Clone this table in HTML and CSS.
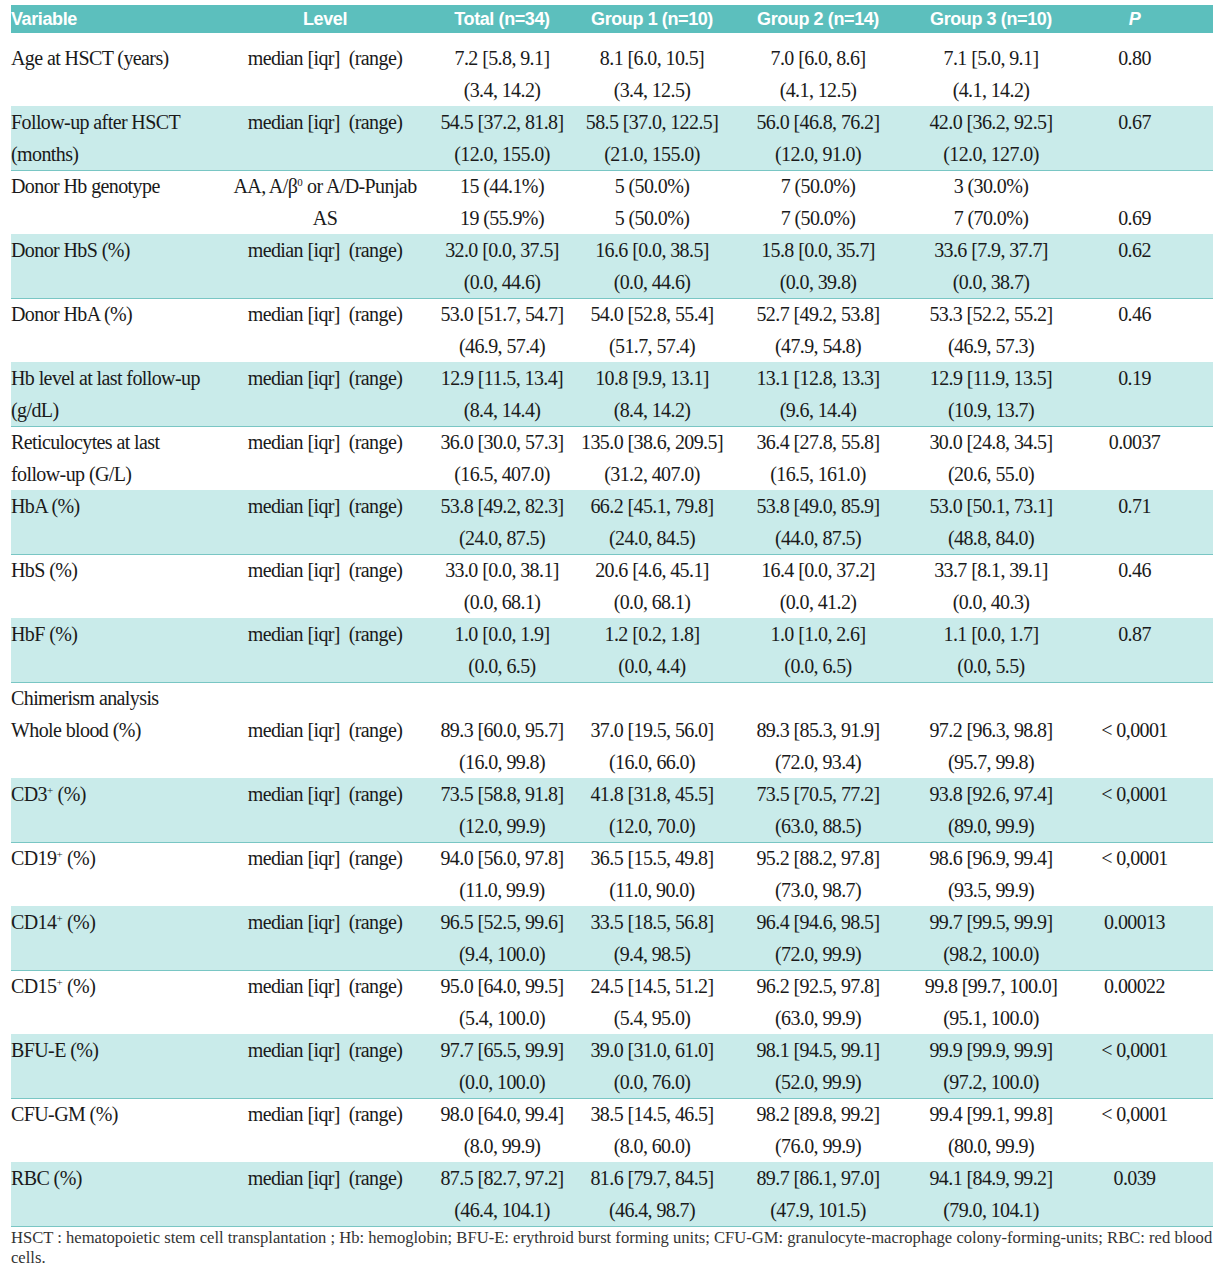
FILE: index.html
```html
<!DOCTYPE html>
<html>
<head>
<meta charset="utf-8">
<link rel="stylesheet" href="styles.css">
</head>
<body>
<div class="table">
  <div class="head">
    <div class="hc left">Variable</div>
    <div class="hc">Level</div>
    <div class="hc">Total (n=34)</div>
    <div class="hc">Group 1 (n=10)</div>
    <div class="hc">Group 2 (n=14)</div>
    <div class="hc">Group 3 (n=10)</div>
    <div class="hc"><i>P</i></div>
  </div>

  <div class="row">
    <div class="var">Age at HSCT (years)</div>
    <div class="c"><span>median [iqr]&nbsp; (range)</span></div>
    <div class="c"><span>7.2 [5.8, 9.1]</span><span>(3.4, 14.2)</span></div>
    <div class="c"><span>8.1 [6.0, 10.5]</span><span>(3.4, 12.5)</span></div>
    <div class="c"><span>7.0 [6.0, 8.6]</span><span>(4.1, 12.5)</span></div>
    <div class="c"><span>7.1 [5.0, 9.1]</span><span>(4.1, 14.2)</span></div>
    <div class="c"><span>0.80</span></div>
  </div>

  <div class="row alt">
    <div class="var">Follow-up after HSCT<br>(months)</div>
    <div class="c"><span>median [iqr]&nbsp; (range)</span></div>
    <div class="c"><span>54.5 [37.2, 81.8]</span><span>(12.0, 155.0)</span></div>
    <div class="c"><span>58.5 [37.0, 122.5]</span><span>(21.0, 155.0)</span></div>
    <div class="c"><span>56.0 [46.8, 76.2]</span><span>(12.0, 91.0)</span></div>
    <div class="c"><span>42.0 [36.2, 92.5]</span><span>(12.0, 127.0)</span></div>
    <div class="c"><span>0.67</span></div>
  </div>

  <div class="row">
    <div class="var">Donor Hb genotype</div>
    <div class="c"><span>AA, A/β<sup>0</sup> or A/D-Punjab</span><span>AS</span></div>
    <div class="c"><span>15 (44.1%)</span><span>19 (55.9%)</span></div>
    <div class="c"><span>5 (50.0%)</span><span>5 (50.0%)</span></div>
    <div class="c"><span>7 (50.0%)</span><span>7 (50.0%)</span></div>
    <div class="c"><span>3 (30.0%)</span><span>7 (70.0%)</span></div>
    <div class="c"><span>&nbsp;</span><span>0.69</span></div>
  </div>

  <div class="row alt">
    <div class="var">Donor HbS (%)</div>
    <div class="c"><span>median [iqr]&nbsp; (range)</span></div>
    <div class="c"><span>32.0 [0.0, 37.5]</span><span>(0.0, 44.6)</span></div>
    <div class="c"><span>16.6 [0.0, 38.5]</span><span>(0.0, 44.6)</span></div>
    <div class="c"><span>15.8 [0.0, 35.7]</span><span>(0.0, 39.8)</span></div>
    <div class="c"><span>33.6 [7.9, 37.7]</span><span>(0.0, 38.7)</span></div>
    <div class="c"><span>0.62</span></div>
  </div>

  <div class="row">
    <div class="var">Donor HbA (%)</div>
    <div class="c"><span>median [iqr]&nbsp; (range)</span></div>
    <div class="c"><span>53.0 [51.7, 54.7]</span><span>(46.9, 57.4)</span></div>
    <div class="c"><span>54.0 [52.8, 55.4]</span><span>(51.7, 57.4)</span></div>
    <div class="c"><span>52.7 [49.2, 53.8]</span><span>(47.9, 54.8)</span></div>
    <div class="c"><span>53.3 [52.2, 55.2]</span><span>(46.9, 57.3)</span></div>
    <div class="c"><span>0.46</span></div>
  </div>

  <div class="row alt">
    <div class="var">Hb level at last follow-up<br>(g/dL)</div>
    <div class="c"><span>median [iqr]&nbsp; (range)</span></div>
    <div class="c"><span>12.9 [11.5, 13.4]</span><span>(8.4, 14.4)</span></div>
    <div class="c"><span>10.8 [9.9, 13.1]</span><span>(8.4, 14.2)</span></div>
    <div class="c"><span>13.1 [12.8, 13.3]</span><span>(9.6, 14.4)</span></div>
    <div class="c"><span>12.9 [11.9, 13.5]</span><span>(10.9, 13.7)</span></div>
    <div class="c"><span>0.19</span></div>
  </div>

  <div class="row">
    <div class="var">Reticulocytes at last<br>follow-up (G/L)</div>
    <div class="c"><span>median [iqr]&nbsp; (range)</span></div>
    <div class="c"><span>36.0 [30.0, 57.3]</span><span>(16.5, 407.0)</span></div>
    <div class="c"><span>135.0 [38.6, 209.5]</span><span>(31.2, 407.0)</span></div>
    <div class="c"><span>36.4 [27.8, 55.8]</span><span>(16.5, 161.0)</span></div>
    <div class="c"><span>30.0 [24.8, 34.5]</span><span>(20.6, 55.0)</span></div>
    <div class="c"><span>0.0037</span></div>
  </div>

  <div class="row alt">
    <div class="var">HbA (%)</div>
    <div class="c"><span>median [iqr]&nbsp; (range)</span></div>
    <div class="c"><span>53.8 [49.2, 82.3]</span><span>(24.0, 87.5)</span></div>
    <div class="c"><span>66.2 [45.1, 79.8]</span><span>(24.0, 84.5)</span></div>
    <div class="c"><span>53.8 [49.0, 85.9]</span><span>(44.0, 87.5)</span></div>
    <div class="c"><span>53.0 [50.1, 73.1]</span><span>(48.8, 84.0)</span></div>
    <div class="c"><span>0.71</span></div>
  </div>

  <div class="row">
    <div class="var">HbS (%)</div>
    <div class="c"><span>median [iqr]&nbsp; (range)</span></div>
    <div class="c"><span>33.0 [0.0, 38.1]</span><span>(0.0, 68.1)</span></div>
    <div class="c"><span>20.6 [4.6, 45.1]</span><span>(0.0, 68.1)</span></div>
    <div class="c"><span>16.4 [0.0, 37.2]</span><span>(0.0, 41.2)</span></div>
    <div class="c"><span>33.7 [8.1, 39.1]</span><span>(0.0, 40.3)</span></div>
    <div class="c"><span>0.46</span></div>
  </div>

  <div class="row alt">
    <div class="var">HbF (%)</div>
    <div class="c"><span>median [iqr]&nbsp; (range)</span></div>
    <div class="c"><span>1.0 [0.0, 1.9]</span><span>(0.0, 6.5)</span></div>
    <div class="c"><span>1.2 [0.2, 1.8]</span><span>(0.0, 4.4)</span></div>
    <div class="c"><span>1.0 [1.0, 2.6]</span><span>(0.0, 6.5)</span></div>
    <div class="c"><span>1.1 [0.0, 1.7]</span><span>(0.0, 5.5)</span></div>
    <div class="c"><span>0.87</span></div>
  </div>

  <div class="row single">
    <div class="var">Chimerism analysis</div>
  </div>

  <div class="row">
    <div class="var">Whole blood (%)</div>
    <div class="c"><span>median [iqr]&nbsp; (range)</span></div>
    <div class="c"><span>89.3 [60.0, 95.7]</span><span>(16.0, 99.8)</span></div>
    <div class="c"><span>37.0 [19.5, 56.0]</span><span>(16.0, 66.0)</span></div>
    <div class="c"><span>89.3 [85.3, 91.9]</span><span>(72.0, 93.4)</span></div>
    <div class="c"><span>97.2 [96.3, 98.8]</span><span>(95.7, 99.8)</span></div>
    <div class="c"><span>&lt; 0,0001</span></div>
  </div>

  <div class="row alt">
    <div class="var">CD3<sup>+</sup> (%)</div>
    <div class="c"><span>median [iqr]&nbsp; (range)</span></div>
    <div class="c"><span>73.5 [58.8, 91.8]</span><span>(12.0, 99.9)</span></div>
    <div class="c"><span>41.8 [31.8, 45.5]</span><span>(12.0, 70.0)</span></div>
    <div class="c"><span>73.5 [70.5, 77.2]</span><span>(63.0, 88.5)</span></div>
    <div class="c"><span>93.8 [92.6, 97.4]</span><span>(89.0, 99.9)</span></div>
    <div class="c"><span>&lt; 0,0001</span></div>
  </div>

  <div class="row">
    <div class="var">CD19<sup>+</sup> (%)</div>
    <div class="c"><span>median [iqr]&nbsp; (range)</span></div>
    <div class="c"><span>94.0 [56.0, 97.8]</span><span>(11.0, 99.9)</span></div>
    <div class="c"><span>36.5 [15.5, 49.8]</span><span>(11.0, 90.0)</span></div>
    <div class="c"><span>95.2 [88.2, 97.8]</span><span>(73.0, 98.7)</span></div>
    <div class="c"><span>98.6 [96.9, 99.4]</span><span>(93.5, 99.9)</span></div>
    <div class="c"><span>&lt; 0,0001</span></div>
  </div>

  <div class="row alt">
    <div class="var">CD14<sup>+</sup> (%)</div>
    <div class="c"><span>median [iqr]&nbsp; (range)</span></div>
    <div class="c"><span>96.5 [52.5, 99.6]</span><span>(9.4, 100.0)</span></div>
    <div class="c"><span>33.5 [18.5, 56.8]</span><span>(9.4, 98.5)</span></div>
    <div class="c"><span>96.4 [94.6, 98.5]</span><span>(72.0, 99.9)</span></div>
    <div class="c"><span>99.7 [99.5, 99.9]</span><span>(98.2, 100.0)</span></div>
    <div class="c"><span>0.00013</span></div>
  </div>

  <div class="row">
    <div class="var">CD15<sup>+</sup> (%)</div>
    <div class="c"><span>median [iqr]&nbsp; (range)</span></div>
    <div class="c"><span>95.0 [64.0, 99.5]</span><span>(5.4, 100.0)</span></div>
    <div class="c"><span>24.5 [14.5, 51.2]</span><span>(5.4, 95.0)</span></div>
    <div class="c"><span>96.2 [92.5, 97.8]</span><span>(63.0, 99.9)</span></div>
    <div class="c"><span>99.8 [99.7, 100.0]</span><span>(95.1, 100.0)</span></div>
    <div class="c"><span>0.00022</span></div>
  </div>

  <div class="row alt">
    <div class="var">BFU-E (%)</div>
    <div class="c"><span>median [iqr]&nbsp; (range)</span></div>
    <div class="c"><span>97.7 [65.5, 99.9]</span><span>(0.0, 100.0)</span></div>
    <div class="c"><span>39.0 [31.0, 61.0]</span><span>(0.0, 76.0)</span></div>
    <div class="c"><span>98.1 [94.5, 99.1]</span><span>(52.0, 99.9)</span></div>
    <div class="c"><span>99.9 [99.9, 99.9]</span><span>(97.2, 100.0)</span></div>
    <div class="c"><span>&lt; 0,0001</span></div>
  </div>

  <div class="row">
    <div class="var">CFU-GM (%)</div>
    <div class="c"><span>median [iqr]&nbsp; (range)</span></div>
    <div class="c"><span>98.0 [64.0, 99.4]</span><span>(8.0, 99.9)</span></div>
    <div class="c"><span>38.5 [14.5, 46.5]</span><span>(8.0, 60.0)</span></div>
    <div class="c"><span>98.2 [89.8, 99.2]</span><span>(76.0, 99.9)</span></div>
    <div class="c"><span>99.4 [99.1, 99.8]</span><span>(80.0, 99.9)</span></div>
    <div class="c"><span>&lt; 0,0001</span></div>
  </div>

  <div class="row alt">
    <div class="var">RBC (%)</div>
    <div class="c"><span>median [iqr]&nbsp; (range)</span></div>
    <div class="c"><span>87.5 [82.7, 97.2]</span><span>(46.4, 104.1)</span></div>
    <div class="c"><span>81.6 [79.7, 84.5]</span><span>(46.4, 98.7)</span></div>
    <div class="c"><span>89.7 [86.1, 97.0]</span><span>(47.9, 101.5)</span></div>
    <div class="c"><span>94.1 [84.9, 99.2]</span><span>(79.0, 104.1)</span></div>
    <div class="c"><span>0.039</span></div>
  </div>
</div>
<p class="note">HSCT : hematopoietic stem cell transplantation ; Hb: hemoglobin; BFU-E: erythroid burst forming units; CFU-GM: granulocyte-macrophage colony-forming-units; RBC: red blood cells.</p>
</body>
</html>
```
FILE: styles.css
```css
html, body {
  margin: 0;
  padding: 0;
  background: #ffffff;
}
body {
  padding: 5px 10px 0 11px;
  font-family: "Liberation Serif", "Times New Roman", serif;
  color: #1a1a1a;
}
.table {
  width: 1202px;
}
.head, .row {
  display: grid;
  grid-template-columns: 229px 170px 184px 116px 216px 130px 157px;
}
.head {
  height: 28px;
  background: #5cbfbd;
  margin-bottom: 9px;
  align-items: center;
}
.hc {
  font-family: "Liberation Sans", Arial, sans-serif;
  font-weight: 700;
  font-size: 18px;
  letter-spacing: -0.4px;
  color: #ffffff;
  display: flex;
  justify-content: center;
  white-space: nowrap;
}
.hc.left {
  justify-content: flex-start;
}
.row {
  font-size: 20px;
  line-height: 32px;
  letter-spacing: -0.6px;
}
.row.alt {
  background: #c9ebea;
  border-bottom: 1px solid #79c6c4;
  margin-bottom: -1px;
}
.c {
  display: flex;
  flex-direction: column;
  align-items: center;
  white-space: nowrap;
}
.var {
  display: block;
}
sup {
  font-size: 11px;
  line-height: 0;
  vertical-align: 7px;
  letter-spacing: 0;
}
.note {
  margin: 2px 0 0 0;
  width: 1205px;
  font-family: "Liberation Serif", "Times New Roman", serif;
  font-size: 16.6px;
  line-height: 20px;
  color: #333333;
}
```
